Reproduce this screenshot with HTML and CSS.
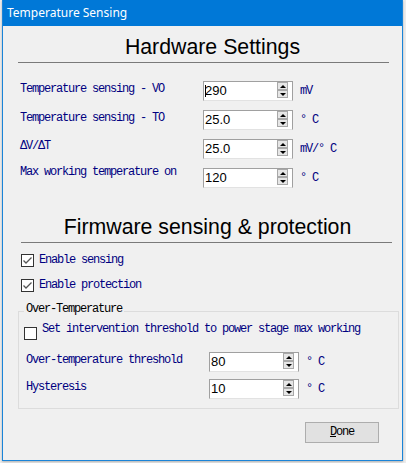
FILE: index.html
```html
<!DOCTYPE html>
<html>
<head>
<meta charset="utf-8">
<link rel="stylesheet" href="styles.css">
</head>
<body>
<div class="window">
  <div class="titlebar">Temperature Sensing</div>
  <div class="content">
    <h1 class="heading heading-hw">Hardware Settings</h1>
    <div class="rule rule-hw"></div>
    <div class="fields fields-hw">
      <div class="label">Temperature sensing - VO</div>
      <div class="spin"><span class="val"><span class="caret"></span>290</span><div class="spinner"><div class="sbtn"><i class="up"></i></div><div class="sbtn"><i class="down"></i></div></div></div>
      <div class="unit">mV</div>

      <div class="label">Temperature sensing - TO</div>
      <div class="spin"><span class="val">25.0</span><div class="spinner"><div class="sbtn"><i class="up"></i></div><div class="sbtn"><i class="down"></i></div></div></div>
      <div class="unit">° C</div>

      <div class="label label-delta">ΔV/ΔT</div>
      <div class="spin"><span class="val">25.0</span><div class="spinner"><div class="sbtn"><i class="up"></i></div><div class="sbtn"><i class="down"></i></div></div></div>
      <div class="unit">mV/° C</div>

      <div class="label label-high">Max working temperature on</div>
      <div class="spin"><span class="val">120</span><div class="spinner"><div class="sbtn"><i class="up"></i></div><div class="sbtn"><i class="down"></i></div></div></div>
      <div class="unit">° C</div>
    </div>

    <h1 class="heading heading-fw">Firmware sensing &amp; protection</h1>
    <div class="rule rule-fw"></div>

    <div class="check check-first">
      <span class="box"><svg width="11" height="11" viewBox="0 0 11 11"><polyline points="1.5,5.5 4,8 9.5,2.5" fill="none" stroke="#555" stroke-width="1.3"/></svg></span>
      <span class="check-text">Enable sensing</span>
    </div>
    <div class="check check-second">
      <span class="box"><svg width="11" height="11" viewBox="0 0 11 11"><polyline points="1.5,5.5 4,8 9.5,2.5" fill="none" stroke="#555" stroke-width="1.3"/></svg></span>
      <span class="check-text">Enable protection</span>
    </div>

    <fieldset class="group">
      <legend>Over-Temperature</legend>
      <div class="check check-group">
        <span class="box"></span>
        <span class="check-text check-text-high">Set intervention threshold to power stage max working</span>
      </div>
      <div class="fields fields-group">
        <div class="label">Over-temperature threshold</div>
        <div class="spin"><span class="val">80</span><div class="spinner"><div class="sbtn"><i class="up"></i></div><div class="sbtn"><i class="down"></i></div></div></div>
        <div class="unit">° C</div>

        <div class="label">Hysteresis</div>
        <div class="spin"><span class="val">10</span><div class="spinner"><div class="sbtn"><i class="up"></i></div><div class="sbtn"><i class="down"></i></div></div></div>
        <div class="unit">° C</div>
      </div>
    </fieldset>

    <div class="actions">
      <button class="btn" type="button"><u>D</u>one</button>
    </div>
  </div>
</div>
</body>
</html>
```
FILE: styles.css
```css
* { box-sizing: border-box; }
html, body { margin: 0; padding: 0; }
body {
  width: 406px;
  height: 463px;
  overflow: hidden;
  background: #ececec;
  font-family: "Liberation Mono", "DejaVu Sans Mono", monospace;
}
.window {
  margin-left: 2px;
  width: 401px;
  height: 461px;
  background: #f0f0f0;
  border: 1px solid #1a84d8;
  border-top: 0;
  box-shadow: 0 1px 2px rgba(0,0,0,0.25);
  display: flex;
  flex-direction: column;
}
.titlebar {
  height: 26px;
  background: #0078d7;
  color: #fff;
  font-family: "Noto Sans", sans-serif;
  font-size: 12px;
  line-height: 25px;
  padding-left: 4px;
}
.content {
  flex: 1;
  display: flex;
  flex-direction: column;
}
.heading {
  margin: 0;
  height: 24px;
  font-family: "Liberation Sans", Arial, sans-serif;
  font-size: 21.3px;
  font-weight: normal;
  line-height: 24px;
  text-align: center;
  color: #000;
}
.heading-hw { margin-top: 9px; padding-left: 20px; }
.heading-fw { margin-top: 27px; padding-left: 10px; }
.rule {
  width: 371px;
  height: 1px;
  margin-top: 3px;
  background: #7a7a7a;
}
.rule-hw { margin-left: 15px; }
.rule-fw { margin-left: 18px; }

.fields {
  display: grid;
  grid-template-columns: 183px 90px auto;
}
.fields-hw { margin: 18px 0 0 17px; row-gap: 9px; }
.fields-group { margin-top: 12px; row-gap: 7px; }

.label, .unit, .check-text, legend, .btn {
  font-family: "Liberation Mono", "DejaVu Sans Mono", monospace;
  font-size: 12px;
  letter-spacing: -1.2px;
}
.label {
  color: #000080;
  line-height: 16px;
  align-self: start;
  white-space: pre;
}
.label-delta { margin-top: -1px; }
.label-high { margin-top: -4px; }
.unit {
  color: #000080;
  margin-left: 7px;
  align-self: center;
  white-space: pre;
  line-height: 16px;
}

.spin {
  height: 20px;
  display: flex;
  align-items: flex-start;
  background: #fff;
  border: 1px solid #a0a0a0;
  border-bottom-color: #e2e2e2;
  padding-left: 1px;
}
.val {
  flex: 1;
  font-family: "Liberation Sans", Arial, sans-serif;
  font-size: 13px;
  line-height: 17px;
  color: #000;
}
.caret {
  display: inline-block;
  width: 1px;
  height: 12px;
  margin-right: -1px;
  background: #000;
  vertical-align: -2px;
}
.spinner {
  width: 11px;
  margin-right: 4px;
  display: flex;
  flex-direction: column;
}
.sbtn {
  height: 8px;
  background: #e6e6e6;
  border: 1px solid #a8a8a8;
  display: flex;
  align-items: center;
  justify-content: center;
}
.up, .down {
  width: 0;
  height: 0;
  border-left: 3px solid transparent;
  border-right: 3px solid transparent;
}
.up { border-bottom: 3px solid #000; }
.down { border-top: 3px solid #000; }

.check {
  display: flex;
  align-items: flex-start;
  gap: 5px;
}
.check-first { margin: 11px 0 0 18px; }
.check-second { margin: 12px 0 0 18px; }
.check-group { margin-left: -2px; }
.box {
  width: 13px;
  height: 13px;
  flex: none;
  border: 1px solid #333;
  background: #fff;
  display: flex;
  align-items: center;
  justify-content: center;
}
.check-text {
  color: #000080;
  line-height: 13px;
  white-space: pre;
}
.check-text-high { margin-top: -4px; }

.group {
  margin: 11px 3px 0 15px;
  padding: 8px 7px 9px 7px;
  border: 1px solid #dcdcdc;
  min-width: 0;
}
.group legend {
  margin-left: -2px;
  padding: 0 2px 4px 2px;
  line-height: 12px;
  color: #000;
}

.actions {
  display: flex;
  justify-content: flex-end;
  margin-top: 13px;
  padding-right: 23px;
}
.btn {
  width: 74px;
  height: 21px;
  padding: 0;
  background: #e1e1e1;
  border: 1px solid #adadad;
  color: #000;
  line-height: 19px;
  text-align: center;
}
```
